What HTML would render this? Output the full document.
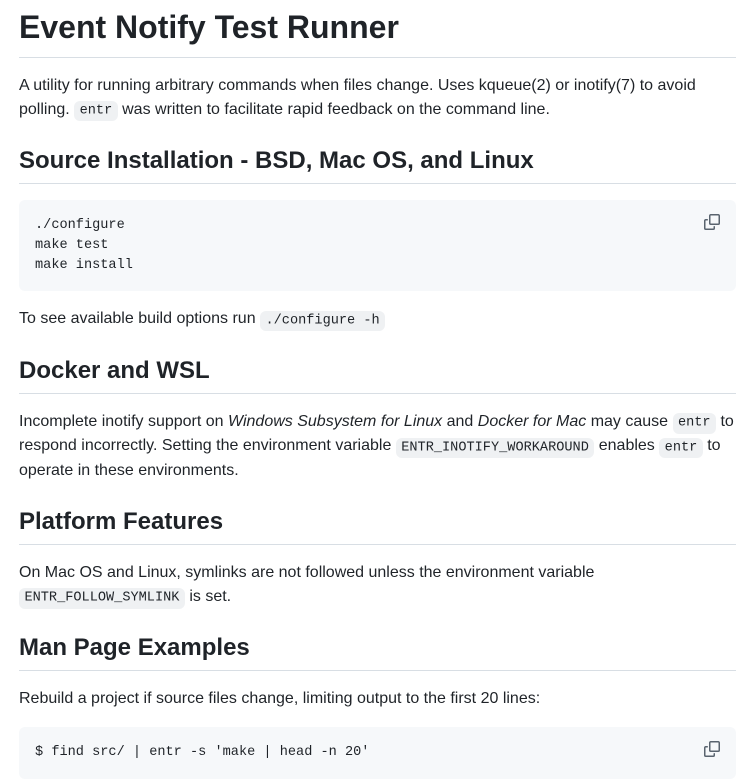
<!DOCTYPE html>
<html><head><meta charset="utf-8"><style>
body{margin:0;padding:7px 15px 0 19px;font-family:"Liberation Sans",sans-serif;font-size:16px;line-height:1.5;color:#1f2328;background:#fff;width:717px;overflow:hidden;height:776px}
h1,h2{font-weight:600;line-height:1.25;padding-bottom:.3em;border-bottom:1px solid #d8dee4;margin:24px 0 16px}
h1{font-size:32px;margin-top:0}
h2{font-size:24px}
p{margin:0 0 16px}
code{font-family:"Liberation Mono",monospace;font-size:85%;padding:.2em .4em;background:#eff1f3;border-radius:6px}
.pre{position:relative;background:#f6f8fa;border-radius:6px;padding:16px;margin:0 0 16px;font-family:"Liberation Mono",monospace;font-size:13.6px;line-height:1.45;white-space:pre}
.cp{position:absolute;right:16px;top:14px}
</style></head><body>
<h1>Event Notify Test Runner</h1>
<p>A utility for running arbitrary commands when files change. Uses kqueue(2) or inotify(7) to avoid polling. <code>entr</code> was written to facilitate rapid feedback on the command line.</p>
<h2>Source Installation - BSD, Mac OS, and Linux</h2>
<div class="pre">./configure
make test
make install<svg class="cp" width="16" height="16" viewBox="0 0 16 16" fill="#59636e"><path d="M0 6.75C0 5.784.784 5 1.75 5h1.5a.75.75 0 0 1 0 1.5h-1.5a.25.25 0 0 0-.25.25v7.5c0 .138.112.25.25.25h7.5a.25.25 0 0 0 .25-.25v-1.5a.75.75 0 0 1 1.5 0v1.5A1.75 1.75 0 0 1 9.25 16h-7.5A1.75 1.75 0 0 1 0 14.25Z"/><path d="M5 1.75C5 .784 5.784 0 6.75 0h7.5C15.216 0 16 .784 16 1.75v7.5A1.75 1.75 0 0 1 14.25 11h-7.5A1.75 1.75 0 0 1 5 9.25Zm1.75-.25a.25.25 0 0 0-.25.25v7.5c0 .138.112.25.25.25h7.5a.25.25 0 0 0 .25-.25v-7.5a.25.25 0 0 0-.25-.25Z"/></svg></div>
<p>To see available build options run <code>./configure -h</code></p>
<h2>Docker and WSL</h2>
<p>Incomplete inotify support on <em>Windows Subsystem for Linux</em> and <em>Docker for Mac</em> may cause <code>entr</code> to respond incorrectly. Setting the environment variable <code>ENTR_INOTIFY_WORKAROUND</code> enables <code>entr</code> to operate in these environments.</p>
<h2>Platform Features</h2>
<p>On Mac OS and Linux, symlinks are not followed unless the environment variable <code>ENTR_FOLLOW_SYMLINK</code> is set.</p>
<h2>Man Page Examples</h2>
<p>Rebuild a project if source files change, limiting output to the first 20 lines:</p>
<div class="pre">$ find src/ | entr -s 'make | head -n 20'<svg class="cp" width="16" height="16" viewBox="0 0 16 16" fill="#59636e"><path d="M0 6.75C0 5.784.784 5 1.75 5h1.5a.75.75 0 0 1 0 1.5h-1.5a.25.25 0 0 0-.25.25v7.5c0 .138.112.25.25.25h7.5a.25.25 0 0 0 .25-.25v-1.5a.75.75 0 0 1 1.5 0v1.5A1.75 1.75 0 0 1 9.25 16h-7.5A1.75 1.75 0 0 1 0 14.25Z"/><path d="M5 1.75C5 .784 5.784 0 6.75 0h7.5C15.216 0 16 .784 16 1.75v7.5A1.75 1.75 0 0 1 14.25 11h-7.5A1.75 1.75 0 0 1 5 9.25Zm1.75-.25a.25.25 0 0 0-.25.25v7.5c0 .138.112.25.25.25h7.5a.25.25 0 0 0 .25-.25v-7.5a.25.25 0 0 0-.25-.25Z"/></svg></div>
</body></html>
